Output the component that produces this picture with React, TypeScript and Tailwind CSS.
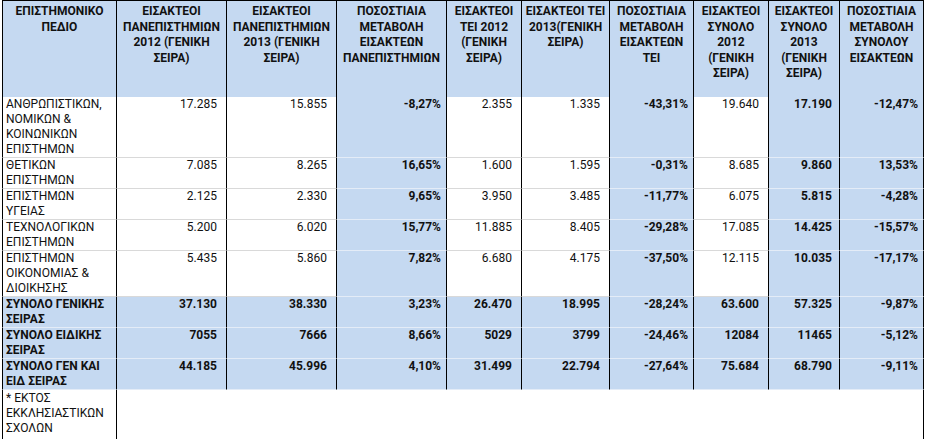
import React from 'react';

type Row = {
  label: string[];
  values: string[];
  total?: boolean;
};

const widths = ['w-[115px]', 'w-[110px]', 'w-[110px]', 'w-[110px]', 'w-[75px]', 'w-[88px]', 'w-[84px]', 'w-[75px]', 'w-[71px]', 'w-[84px]'];

const headers: string[][] = [
  ['ΕΠΙΣΤΗΜΟΝΙΚΟ', 'ΠΕΔΙΟ'],
  ['ΕΙΣΑΚΤΕΟΙ', 'ΠΑΝΕΠΙΣΤΗΜΙΩΝ', '2012 (ΓΕΝΙΚΗ', 'ΣΕΙΡΑ)'],
  ['ΕΙΣΑΚΤΕΟΙ', 'ΠΑΝΕΠΙΣΤΗΜΙΩΝ', '2013 (ΓΕΝΙΚΗ', 'ΣΕΙΡΑ)'],
  ['ΠΟΣΟΣΤΙΑΙΑ', 'ΜΕΤΑΒΟΛΗ', 'ΕΙΣΑΚΤΕΩΝ', 'ΠΑΝΕΠΙΣΤΗΜΙΩΝ'],
  ['ΕΙΣΑΚΤΕΟΙ', 'ΤΕΙ 2012', '(ΓΕΝΙΚΗ', 'ΣΕΙΡΑ)'],
  ['ΕΙΣΑΚΤΕΟΙ ΤΕΙ', '2013(ΓΕΝΙΚΗ', 'ΣΕΙΡΑ)'],
  ['ΠΟΣΟΣΤΙΑΙΑ', 'ΜΕΤΑΒΟΛΗ', 'ΕΙΣΑΚΤΕΩΝ', 'ΤΕΙ'],
  ['ΕΙΣΑΚΤΕΟΙ', 'ΣΥΝΟΛΟ', '2012', '(ΓΕΝΙΚΗ', 'ΣΕΙΡΑ)'],
  ['ΕΙΣΑΚΤΕΟΙ', 'ΣΥΝΟΛΟ', '2013', '(ΓΕΝΙΚΗ', 'ΣΕΙΡΑ)'],
  ['ΠΟΣΟΣΤΙΑΙΑ', 'ΜΕΤΑΒΟΛΗ', 'ΣΥΝΟΛΟΥ', 'ΕΙΣΑΚΤΕΩΝ'],
];

const rows: Row[] = [
  { label: ['ΑΝΘΡΩΠΙΣΤΙΚΩΝ,', 'ΝΟΜΙΚΩΝ &', 'ΚΟΙΝΩΝΙΚΩΝ', 'ΕΠΙΣΤΗΜΩΝ'], values: ['17.285', '15.855', '-8,27%', '2.355', '1.335', '-43,31%', '19.640', '17.190', '-12,47%'] },
  { label: ['ΘΕΤΙΚΩΝ', 'ΕΠΙΣΤΗΜΩΝ'], values: ['7.085', '8.265', '16,65%', '1.600', '1.595', '-0,31%', '8.685', '9.860', '13,53%'] },
  { label: ['ΕΠΙΣΤΗΜΩΝ', 'ΥΓΕΙΑΣ'], values: ['2.125', '2.330', '9,65%', '3.950', '3.485', '-11,77%', '6.075', '5.815', '-4,28%'] },
  { label: ['ΤΕΧΝΟΛΟΓΙΚΩΝ', 'ΕΠΙΣΤΗΜΩΝ'], values: ['5.200', '6.020', '15,77%', '11.885', '8.405', '-29,28%', '17.085', '14.425', '-15,57%'] },
  { label: ['ΕΠΙΣΤΗΜΩΝ', 'ΟΙΚΟΝΟΜΙΑΣ &', 'ΔΙΟΙΚΗΣΗΣ'], values: ['5.435', '5.860', '7,82%', '6.680', '4.175', '-37,50%', '12.115', '10.035', '-17,17%'] },
  { label: ['ΣΥΝΟΛΟ ΓΕΝΙΚΗΣ', 'ΣΕΙΡΑΣ'], values: ['37.130', '38.330', '3,23%', '26.470', '18.995', '-28,24%', '63.600', '57.325', '-9,87%'], total: true },
  { label: ['ΣΥΝΟΛΟ ΕΙΔΙΚΗΣ', 'ΣΕΙΡΑΣ'], values: ['7055', '7666', '8,66%', '5029', '3799', '-24,46%', '12084', '11465', '-5,12%'], total: true },
  { label: ['ΣΥΝΟΛΟ ΓΕΝ ΚΑΙ', 'ΕΙΔ ΣΕΙΡΑΣ'], values: ['44.185', '45.996', '4,10%', '31.499', '22.794', '-27,64%', '75.684', '68.790', '-9,11%'], total: true },
];

// columns shaded blue in the plain rows (index into values)
const shaded = [2, 5, 7, 8];
const bold = [2, 5, 7, 8];
const percent = [2, 5, 8];

const rowHeights = ['h-[60px]', 'h-[31px]', 'h-[31px]', 'h-[31px]', 'h-[46px]', 'h-[31px]', 'h-[31px]', 'h-[31px]'];

export default function App() {
  return (
    <div className="w-[928px] h-[439px] overflow-hidden bg-white pl-[2px] text-[12px] leading-[15px] text-[#111]" style={{ fontFamily: 'Roboto, "Liberation Sans", sans-serif' }}>
      <table className="table-fixed border-separate border-spacing-0">
        <colgroup>
          {widths.map((w, i) => (
            <col key={i} className={w} />
          ))}
        </colgroup>
        <thead>
          <tr>
            {headers.map((lines, i) => (
              <th
                key={i}
                className={`h-[97px] align-top bg-[#c5d9f1] border-t border-r border-black pt-[3px] px-[2px] text-center font-bold leading-[15.5px] ${i === 0 ? 'border-l' : ''}`}
              >
                {lines.map((l, j) => (
                  <div key={j} className="whitespace-nowrap">{l}</div>
                ))}
              </th>
            ))}
          </tr>
        </thead>
        <tbody>
          {rows.map((row, r) => (
            <tr key={r} className={rowHeights[r]}>
              <td
                className={`align-top border-l border-r border-l-black border-r-black border-b pl-[3px] ${row.total ? 'bg-[#c5d9f1] border-b-[#e4ecf7] font-bold' : 'bg-white border-b-[#d9d9d9]'}`}
              >
                {row.label.map((l, j) => (
                  <div key={j} className="whitespace-nowrap">{l}</div>
                ))}
              </td>
              {row.values.map((v, c) => {
                const blue = row.total || shaded.includes(c);
                const isBold = row.total || bold.includes(c);
                const pad = percent.includes(c) ? 'pr-[5px]' : c === 7 ? 'pr-[7px]' : 'pr-[9px]';
                return (
                  <td
                    key={c}
                    className={`align-top text-right whitespace-nowrap border-r border-r-black border-b ${pad} ${blue ? 'bg-[#c5d9f1] border-b-[#e4ecf7]' : 'bg-white border-b-[#d9d9d9]'} ${isBold ? 'font-bold' : ''}`}
                  >
                    {v}
                  </td>
                );
              })}
            </tr>
          ))}
          <tr className="h-[50px]">
            <td className="align-top border-l border-r border-black pl-[3px] pt-[1px]">
              <div className="whitespace-nowrap">* ΕΚΤΟΣ</div>
              <div className="whitespace-nowrap">ΕΚΚΛΗΣΙΑΣΤΙΚΩΝ</div>
              <div className="whitespace-nowrap">ΣΧΟΛΩΝ</div>
            </td>
            <td colSpan={9} className="border-r border-black" />
          </tr>
        </tbody>
      </table>
    </div>
  );
}
